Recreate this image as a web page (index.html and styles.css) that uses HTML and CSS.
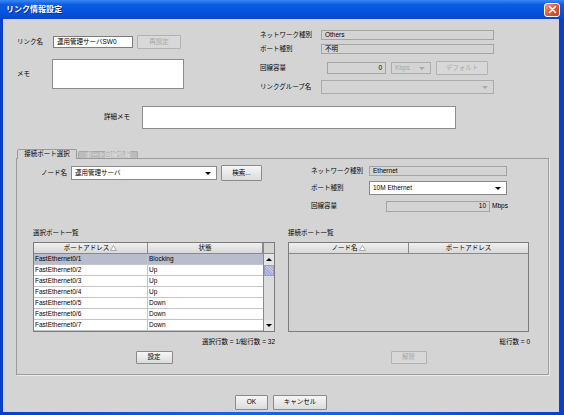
FILE: index.html
```html
<!DOCTYPE html>
<html lang="ja">
<head>
<meta charset="UTF-8" />
<title>リンク情報設定</title>
<link rel="stylesheet" href="styles.css">
</head>
<body>
  <div class="window" role="dialog" aria-label="リンク情報設定">
    <div class="titlebar">
      <span class="title">リンク情報設定</span>
      <span class="close" aria-label="閉じる">
        <svg width="9" height="9" viewBox="0 0 9 9"><path d="M1.5 1.5 L7.5 7.5 M7.5 1.5 L1.5 7.5" stroke="#fff" stroke-width="1.6" stroke-linecap="round"/></svg>
      </span>
    </div>

    <div class="client">
      <div class="top">
        <div class="top-left">
          <div class="row r-name">
            <span class="lbl w36">リンク名</span>
            <div class="field white w80">運用管理サーバSW0</div>
            <div class="btn off w44 ml4">再設定</div>
          </div>
          <div class="row r-memo">
            <span class="lbl w35">メモ</span>
            <div class="area memo"></div>
          </div>
        </div>

        <div class="top-right">
          <div class="row h10">
            <span class="lbl w61">ネットワーク種別</span>
            <div class="field w173">Others</div>
          </div>
          <div class="row h10 mt4">
            <span class="lbl w61">ポート種別</span>
            <div class="field w173">不明</div>
          </div>
          <div class="row h14 mt7">
            <span class="lbl w67">回線容量</span>
            <div class="field num w59 h12">0</div>
            <div class="combo off w40 h12 ml5"><span class="val">Kbps</span><span class="arrow"></span></div>
            <div class="btn off w52 ml5">デフォルト</div>
          </div>
          <div class="row h14 mt5">
            <span class="lbl w61">リンクグループ名</span>
            <div class="combo off w173 h14"><span class="val"></span><span class="arrow"></span></div>
          </div>
        </div>
      </div>

      <div class="row r-detail">
        <span class="lbl detail-lbl">詳細メモ</span>
        <div class="area detail"></div>
      </div>

      <div class="tabs">
        <div class="tab active">接続ポート選択</div>
        <div class="tab disabled">ポート回線情報</div>
      </div>

      <div class="tabpanel">
        <div class="pane pane-left">
          <div class="row node-row">
            <span class="lbl node-lbl">ノード名</span>
            <div class="combo w146 h14"><span class="val">運用管理サーバ</span><span class="arrow"></span></div>
            <div class="btn w41 h16 ml4">検索...</div>
          </div>

          <div class="caption mt48">選択ポート一覧</div>
          <div class="table t-left">
            <div class="grid">
              <div class="thead">
                <div class="th c1">ポートアドレス<svg class="sort" width="7" height="6" viewBox="0 0 7 6"><path d="M3.5 0.5 L6.5 5.5 L0.5 5.5 Z" fill="#fff" stroke="#9a9a9a" stroke-width="0.8"/></svg></div>
                <div class="th c2">状態</div>
              </div>
              <div class="tbody" id="port-rows"></div>
            </div>
            <div class="vscroll">
              <div class="corner"></div>
              <div class="sbtn"><span class="up"></span></div>
              <div class="thumb"></div>
              <div class="track"></div>
              <div class="sbtn"><span class="down"></span></div>
            </div>
          </div>
          <div class="count left-count">選択行数 = 1/総行数 = 32</div>
          <div class="btn-line left-btns">
            <div class="btn w37 h13">設定</div>
          </div>
        </div>

        <div class="pane pane-right">
          <div class="form">
            <div class="row h10">
              <span class="lbl w58">ネットワーク種別</span>
              <div class="field w138">Ethernet</div>
            </div>
            <div class="row h14 mt5">
              <span class="lbl w58">ポート種別</span>
              <div class="combo w138 h14"><span class="val">10M Ethernet</span><span class="arrow"></span></div>
            </div>
            <div class="row h11 mt6">
              <span class="lbl w75">回線容量</span>
              <div class="field num w104 h11">10</div>
              <span class="unit">Mbps</span>
            </div>
          </div>

          <div class="caption mt17">接続ポート一覧</div>
          <div class="table t-right">
            <div class="grid">
              <div class="thead">
                <div class="th r1">ノード名<svg class="sort" width="7" height="6" viewBox="0 0 7 6"><path d="M3.5 0.5 L6.5 5.5 L0.5 5.5 Z" fill="#fff" stroke="#9a9a9a" stroke-width="0.8"/></svg></div>
                <div class="th r2">ポートアドレス</div>
              </div>
              <div class="tbody empty"></div>
            </div>
          </div>
          <div class="count right-count">総行数 = 0</div>
          <div class="btn-line right-btns">
            <div class="btn off w36 h13">解除</div>
          </div>
        </div>
      </div>

      <div class="actions">
        <div class="btn w33 h15">OK</div>
        <div class="btn w54 h15">キャンセル</div>
      </div>
    </div>
  </div>

<script>
  const ports = [
    { name: 'FastEthernet0/1', state: 'Blocking', selected: true },
    { name: 'FastEthernet0/2', state: 'Up' },
    { name: 'FastEthernet0/3', state: 'Up' },
    { name: 'FastEthernet0/4', state: 'Up' },
    { name: 'FastEthernet0/5', state: 'Down' },
    { name: 'FastEthernet0/6', state: 'Down' },
    { name: 'FastEthernet0/7', state: 'Down' }
  ];

  const rows = document.getElementById('port-rows');
  ports.forEach(p => {
    const tr = document.createElement('div');
    tr.className = 'tr' + (p.selected ? ' selected' : '');
    const a = document.createElement('div');
    a.className = 'td c1';
    a.textContent = p.name;
    const b = document.createElement('div');
    b.className = 'td c2';
    b.textContent = p.state;
    tr.appendChild(a);
    tr.appendChild(b);
    rows.appendChild(tr);
  });
</script>
</body>
</html>
```

FILE: styles.css
```css
* { box-sizing: border-box; }
html, body {
  margin: 0; padding: 0;
}
body {
  width: 564px;
  height: 415px;
  overflow: hidden;
  font-family: "Liberation Sans", "Noto Sans CJK JP", sans-serif;
  font-size: 6.5px;
  line-height: 1;
  color: #000;
}
.window {
  width: 564px;
  height: 415px;
  display: flex;
  flex-direction: column;
  background: linear-gradient(to right, #0a3fc8, #1a5fe4 40%, #1a5fe4 60%, #0a3fc8);
}
.titlebar {
  height: 19px;
  flex: none;
  display: flex;
  align-items: center;
  padding: 0 4px 0 6px;
  background: linear-gradient(#3a87f4, #0a5ae2 25%, #0453dc 70%, #0a45c8);
  color: #fff;
}
.title {
  font-weight: bold;
  font-size: 8px;
  text-shadow: 1px 1px 0 #0a2a8a;
}
.close {
  margin-left: auto;
  width: 16px;
  height: 14px;
  border: 1px solid #fff;
  border-radius: 3px;
  background: linear-gradient(135deg, #f29a7c, #e05a30 50%, #c8401c);
  display: flex;
  align-items: center;
  justify-content: center;
}
.client {
  flex: 1;
  margin: 0 5px 3px 3px;
  background: #d4d4d4;
  display: flex;
  flex-direction: column;
}

/* generic pieces */
.row { display: flex; align-items: center; }
.lbl { flex: none; white-space: nowrap; }
.field {
  height: 10px;
  border: 1px solid #a4a4a4;
  background: #d4d4d4;
  padding: 0 3px;
  display: flex;
  align-items: center;
  white-space: nowrap;
  overflow: hidden;
}
.field.white { background: #fff; border-color: #7c7c7c; height: 12px; }
.field.num { justify-content: flex-end; }
.area {
  background: #fff;
  border: 1px solid #8c8c8c;
}
.btn {
  height: 14px;
  border: 1px solid #8a8a8a;
  border-radius: 1px;
  background: linear-gradient(#f6f6f6, #dcdcdc);
  display: flex;
  align-items: center;
  justify-content: center;
  white-space: nowrap;
  flex: none;
}
.btn.off { color: #a8a8a8; border-color: #b2b2b2; background: #d8d8d8; }
.combo {
  display: flex;
  align-items: center;
  border: 1px solid #8a8a8a;
  background: #fff;
  padding-left: 3px;
  flex: none;
}
.combo .val { flex: 1; white-space: nowrap; }
.combo .arrow {
  width: 0; height: 0;
  border-left: 3px solid transparent;
  border-right: 3px solid transparent;
  border-top: 3.5px solid #000;
  margin-right: 5px;
}
.combo.off { background: #d4d4d4; border-color: #acacac; color: #a8a8a8; }
.combo.off .arrow { border-top-color: #a8a8a8; }

/* sizes */
.w33 { width: 33px; } .w35 { width: 35px; } .w36 { width: 36px; } .w37 { width: 37px; }
.w40 { width: 40px; } .w41 { width: 41px; } .w44 { width: 44px; } .w52 { width: 52px; }
.w54 { width: 54px; } .w58 { width: 58px; } .w59 { width: 59px; } .w61 { width: 61px; }
.w67 { width: 67px; } .w75 { width: 75px; } .w80 { width: 80px; } .w104 { width: 104px; }
.w138 { width: 138px; } .w146 { width: 146px; } .w173 { width: 173px; }
.h10 { height: 10px; } .h11 { height: 11px; } .h12 { height: 12px; } .h13 { height: 13px; }
.h14 { height: 14px; } .h15 { height: 15px; } .h16 { height: 16px; }
.mt4 { margin-top: 4px; } .mt5 { margin-top: 5px; } .mt6 { margin-top: 6px; } .mt7 { margin-top: 7px; }
.mt17 { margin-top: 17px; } .mt48 { margin-top: 48px; }
.ml4 { margin-left: 4px; } .ml5 { margin-left: 5px; }

/* top block */
.top {
  display: flex;
  align-items: flex-start;
  padding: 11px 0 0 14px;
}
.top-left { width: 167px; margin-top: 5px; }
.r-name { height: 14px; }
.r-memo { margin-top: 10px; }
.memo { width: 132px; height: 30px; }
.top-right { margin-left: 76px; width: 234px; }

.r-detail { margin-top: 12px; padding-left: 14px; }
.detail-lbl { width: 125px; text-align: right; padding-right: 12px; }
.detail { width: 314px; height: 23px; }

/* tabs */
.tabs {
  display: flex;
  align-items: flex-end;
  height: 9px;
  margin: 20px 0 0 14px;
}
.tab {
  width: 60px;
  display: flex;
  align-items: center;
  justify-content: center;
  border: 1px solid #9a9a9a;
  border-bottom: none;
  border-radius: 2px 2px 0 0;
  white-space: nowrap;
}
.tab.active {
  height: 10px;
  margin-bottom: -1px;
  background: #d4d4d4;
  position: relative;
  z-index: 1;
}
.tab.disabled {
  height: 7px;
  margin-left: 1px;
  background: #bcbcbc;
  color: #e2e2e2;
  border-color: #a8a8a8;
}
.tabpanel {
  margin-left: 13px;
  width: 533px;
  height: 217px;
  border: 1px solid #9c9c9c;
  box-shadow: 1px 1px 0 #ececec;
  display: flex;
}
.pane { display: flex; flex-direction: column; }
.pane-left { width: 266px; }
.pane-right { width: 265px; }

.node-row { margin-top: 6px; height: 16px; }
.node-lbl { width: 54px; text-align: right; padding-right: 4px; }
.caption { height: 9px; display: flex; align-items: center; margin-left: 16px; }
.pane-right .caption { margin-left: 5px; }
.form { padding: 7px 0 0 28px; }
.unit { margin-left: 2px; }

/* tables */
.table {
  margin-top: 4px;
  height: 90px;
  border: 1px solid #7c7c7c;
  display: flex;
  flex: none;
}
.t-left { width: 242px; margin-left: 16px; }
.t-right { width: 241px; margin-left: 5px; }
.grid { flex: 1; display: flex; flex-direction: column; }
.thead { display: flex; height: 11px; flex: none; }
.th {
  display: flex;
  align-items: center;
  justify-content: center;
  background: linear-gradient(#efefef, #d9d9d9);
  border-right: 1px solid #8a8a8a;
  border-bottom: 1px solid #8a8a8a;
  white-space: nowrap;
}
.sort { margin-left: 1px; }
.c1 { width: 114px; }
.c2 { width: 115px; }
.r1 { width: 120px; }
.r2 { width: 119px; border-right: none; }
.tbody { flex: 1; background: #fff; }
.tbody.empty { background: #d2d2d2; }
.tr { display: flex; height: 11px; border-bottom: 1px solid #c4c4c4; background: #fff; }
.tr.selected { background: #b8bccc; }
.td {
  display: flex;
  align-items: center;
  padding-left: 1px;
  white-space: nowrap;
}
.td.c1 { border-right: 1px solid #c4c4c4; }

.vscroll {
  width: 11px;
  flex: none;
  display: flex;
  flex-direction: column;
  border-left: 1px solid #8a8a8a;
  background: #dcdcdc;
}
.vscroll .corner { height: 11px; border-bottom: 1px solid #8a8a8a; background: #d4d4d4; }
.sbtn {
  height: 11px;
  display: flex;
  align-items: center;
  justify-content: center;
  background: #e4e4e4;
}
.sbtn .up, .sbtn .down {
  width: 0; height: 0;
  border-left: 3px solid transparent;
  border-right: 3px solid transparent;
}
.sbtn .up { border-bottom: 3px solid #000; }
.sbtn .down { border-top: 3px solid #000; }
.thumb {
  height: 11px;
  background: repeating-linear-gradient(45deg, #a4a8d8 0 1px, #c4c6e8 1px 2px);
  border: 1px solid #9a9ec8;
}
.track { flex: 1; background: #dcdcdc; }

.count {
  margin-top: 6px;
  height: 9px;
  display: flex;
  align-items: center;
  justify-content: flex-end;
  white-space: nowrap;
}
.left-count { width: 258px; }
.right-count { width: 247px; }
.btn-line { display: flex; justify-content: center; margin-top: 4px; }
.left-btns { width: 242px; margin-left: 16px; }
.right-btns { width: 241px; margin-left: 5px; }

.actions {
  display: flex;
  justify-content: center;
  gap: 5px;
  margin-top: 20px;
}
```
